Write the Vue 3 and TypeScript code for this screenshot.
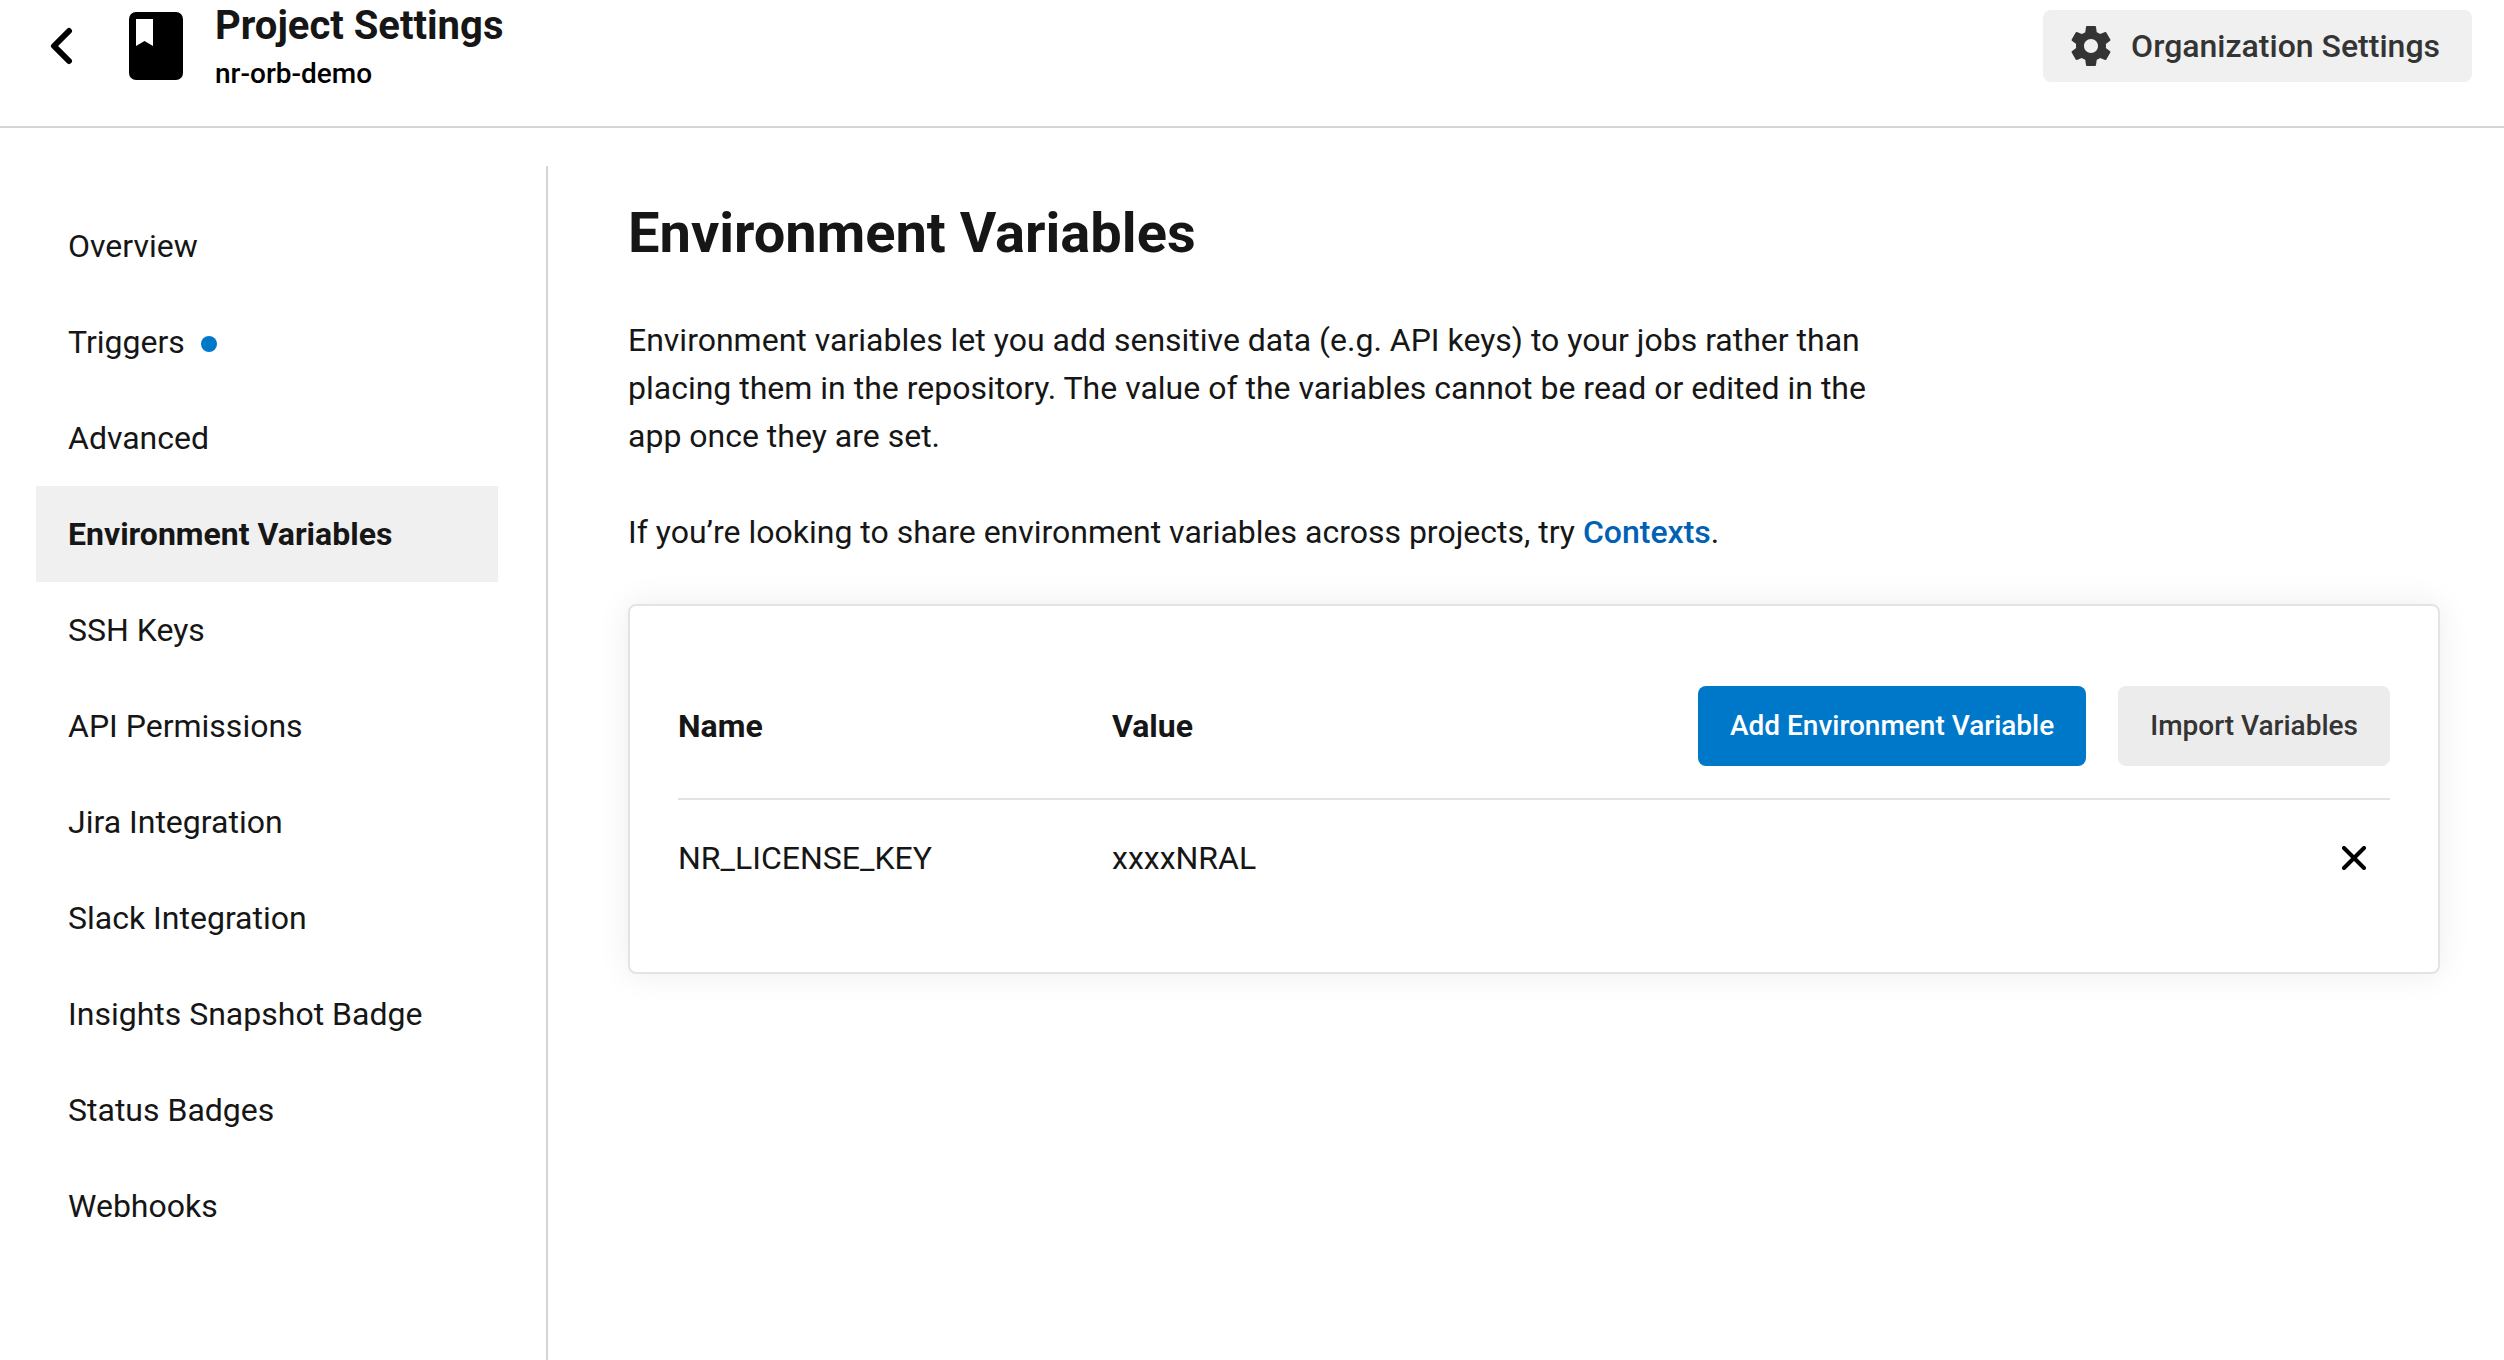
<script setup lang="ts">
interface NavItem {
  label: string
  active?: boolean
  dot?: boolean
}

interface EnvVar {
  name: string
  value: string
}

const navItems: NavItem[] = [
  { label: 'Overview' },
  { label: 'Triggers', dot: true },
  { label: 'Advanced' },
  { label: 'Environment Variables', active: true },
  { label: 'SSH Keys' },
  { label: 'API Permissions' },
  { label: 'Jira Integration' },
  { label: 'Slack Integration' },
  { label: 'Insights Snapshot Badge' },
  { label: 'Status Badges' },
  { label: 'Webhooks' },
]

const envVars: EnvVar[] = [{ name: 'NR_LICENSE_KEY', value: 'xxxxNRAL' }]
</script>

<template>
  <div class="page">
    <header class="topbar">
      <button class="icon-button" type="button" aria-label="Back">
        <svg width="24" height="40" viewBox="0 0 24 40" fill="none" stroke="#000" stroke-width="6" stroke-linecap="round" stroke-linejoin="round">
          <path d="M19 5 4 20 19 35" />
        </svg>
      </button>
      <svg class="book" width="54" height="68" viewBox="0 0 54 68" aria-hidden="true">
        <rect width="54" height="68" rx="7" fill="#000" />
        <path d="M7 7H24V34L15.5 29 7 34Z" fill="#fff" />
      </svg>
      <div class="project">
        <div class="project-title">Project Settings</div>
        <div class="project-name">nr-orb-demo</div>
      </div>
      <button class="org-button" type="button">
        <svg width="48" height="48" viewBox="0 0 24 24" fill="#343434" aria-hidden="true">
          <path d="M19.43 12.98c.04-.32.07-.64.07-.98s-.03-.66-.07-.98l2.11-1.65c.19-.15.24-.42.12-.64l-2-3.46c-.12-.22-.39-.3-.61-.22l-2.49 1c-.52-.4-1.08-.73-1.69-.98l-.38-2.65A.488.488 0 0 0 14 2h-4c-.25 0-.46.18-.49.42l-.38 2.65c-.61.25-1.17.59-1.69.98l-2.49-1c-.23-.09-.49 0-.61.22l-2 3.46c-.13.22-.07.49.12.64l2.11 1.65c-.04.32-.07.65-.07.98s.03.66.07.98l-2.11 1.65c-.19.15-.24.42-.12.64l2 3.46c.12.22.39.3.61.22l2.49-1c.52.4 1.08.73 1.69.98l.38 2.65c.03.24.24.42.49.42h4c.25 0 .46-.18.49-.42l.38-2.65c.61-.25 1.17-.59 1.69-.98l2.49 1c.23.09.49 0 .61-.22l2-3.46c.12-.22.07-.49-.12-.64l-2.11-1.65zM12 15.5c-1.93 0-3.5-1.57-3.5-3.5s1.57-3.5 3.5-3.5 3.5 1.57 3.5 3.5-1.57 3.5-3.5 3.5z" />
        </svg>
        Organization Settings
      </button>
    </header>

    <div class="body">
      <nav class="sidebar">
        <a
          v-for="item in navItems"
          :key="item.label"
          href="#"
          class="nav-item"
          :class="{ active: item.active }"
        >
          {{ item.label }}
          <span v-if="item.dot" class="dot"></span>
        </a>
      </nav>

      <main class="content">
        <h1>Environment Variables</h1>
        <div class="description">
          <p>
            Environment variables let you add sensitive data (e.g. API keys) to your jobs rather than
            placing them in the repository. The value of the variables cannot be read or edited in the
            app once they are set.
          </p>
          <p>
            If you’re looking to share environment variables across projects, try
            <a href="#" class="link">Contexts</a>.
          </p>
        </div>

        <section class="card">
          <table>
            <thead>
              <tr>
                <th class="key-col" scope="col">Name</th>
                <th class="key-col" scope="col">Value</th>
                <th>
                  <div class="actions">
                    <button class="btn primary" type="button">Add Environment Variable</button>
                    <button class="btn secondary" type="button">Import Variables</button>
                  </div>
                </th>
              </tr>
            </thead>
            <tbody>
              <tr v-for="v in envVars" :key="v.name">
                <td>{{ v.name }}</td>
                <td>{{ v.value }}</td>
                <td>
                  <div class="actions">
                    <button class="icon-button remove" type="button" :aria-label="'Remove ' + v.name">
                      <svg width="24" height="24" viewBox="0 0 24 24" fill="none" stroke="#000" stroke-width="4" stroke-linecap="round">
                        <path d="M2 2 22 22M22 2 2 22" />
                      </svg>
                    </button>
                  </div>
                </td>
              </tr>
            </tbody>
          </table>
        </section>
      </main>
    </div>
  </div>
</template>

<style>
body {
  margin: 0;
  background: #fff;
}
</style>

<style scoped>
.page {
  display: flex;
  flex-direction: column;
  min-height: 100vh;
  box-sizing: border-box;
  font-family: Roboto, "Liberation Sans", sans-serif;
  font-size: 32px;
  line-height: 48px;
  color: #161616;
}

button {
  font-family: inherit;
  border: 0;
  cursor: pointer;
  white-space: nowrap;
}

.icon-button {
  display: flex;
  padding: 0;
  background: none;
}

.topbar {
  display: flex;
  align-items: center;
  height: 92px;
  padding: 0 32px 34px 50px;
  border-bottom: 2px solid #d5d5d5;
}

.book {
  margin: 0 32px 0 55px;
}

.project {
  flex: 1;
  padding-top: 8px;
}

.project-title {
  font-size: 40px;
  line-height: 48px;
  font-weight: 700;
}

.project-name {
  font-size: 28px;
  line-height: 48px;
  font-weight: 500;
  color: #000;
}

.org-button {
  display: flex;
  align-items: center;
  gap: 16px;
  height: 72px;
  padding: 0 32px 0 24px;
  border-radius: 8px;
  background: #f0f0f0;
  color: #343434;
  font-size: 32px;
  font-weight: 500;
}

.body {
  flex: 1;
  display: flex;
  padding-top: 38px;
}

.sidebar {
  flex: none;
  width: 462px;
  padding: 32px 48px 32px 36px;
  border-right: 2px solid #d5d5d5;
}

.nav-item {
  display: flex;
  align-items: center;
  gap: 16px;
  height: 96px;
  padding: 0 32px;
  color: inherit;
  text-decoration: none;
}

.nav-item.active {
  background: #f0f0f0;
  font-weight: 700;
}

.dot {
  width: 16px;
  height: 16px;
  margin-top: 4px;
  border-radius: 50%;
  background: #0078ca;
}

.content {
  flex: 1;
  min-width: 0;
  padding: 32px 64px 64px 80px;
}

h1 {
  margin: 0;
  font-size: 56px;
  line-height: 70px;
  font-weight: 700;
}

.description {
  max-width: 1280px;
  margin-top: 48px;
}

p {
  margin: 0 0 48px;
}

.link {
  color: #0061b5;
  font-weight: 500;
  text-decoration: none;
}

.card {
  padding: 80px 48px 56px;
  border: 2px solid #e3e3e3;
  border-radius: 8px;
  box-shadow: 0 0 32px rgba(0, 0, 0, 0.08);
}

table {
  width: 100%;
  table-layout: fixed;
  border-collapse: collapse;
}

th,
td {
  padding: 0;
  text-align: left;
}

th {
  height: 80px;
  padding-bottom: 32px;
  border-bottom: 2px solid #e3e3e3;
  font-weight: 700;
}

td {
  height: 116px;
}

.key-col {
  width: 434px;
}

.actions {
  display: flex;
  justify-content: flex-end;
  gap: 32px;
}

.btn {
  height: 80px;
  padding: 0 32px 2px;
  border-radius: 8px;
  font-size: 28px;
  font-weight: 500;
}

.primary {
  background: #0078ca;
  color: #fff;
}

.secondary {
  background: #ececec;
  color: #343434;
}

.remove {
  margin-right: 24px;
}
</style>
